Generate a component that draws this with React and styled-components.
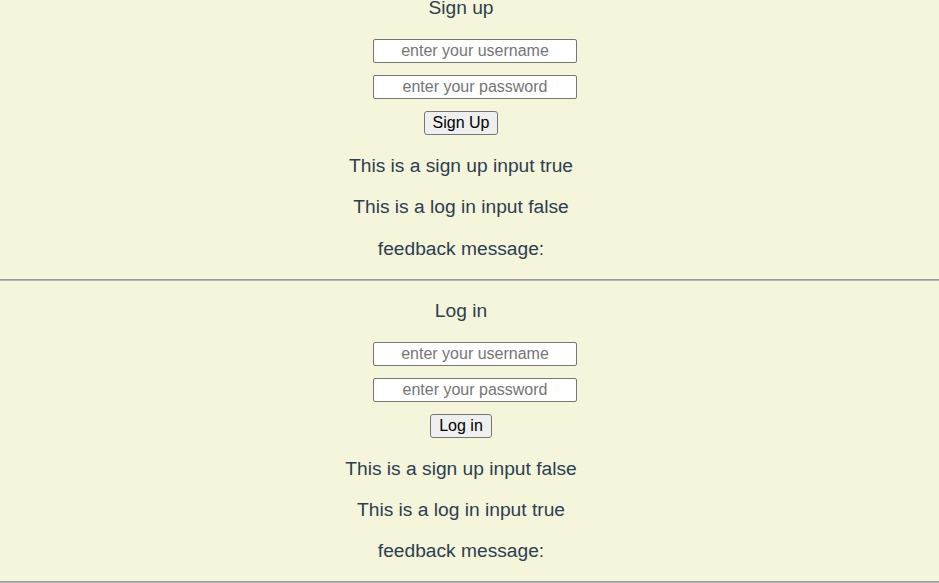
import React from 'react'
import styled, { createGlobalStyle } from 'styled-components'

const GlobalStyle = createGlobalStyle`
  html, body {
    margin: 0;
    padding: 0;
    background: #f5f5dc;
  }
  body {
    font-family: "Liberation Sans", Arial, sans-serif;
    color: #2c3e50;
    overflow: hidden;
  }
`

const Page = styled.div`
  margin-top: -22px;
  text-align: center;
`

const Section = styled.section`
  display: flex;
  flex-direction: column;
  align-items: center;
  padding: 19px 17px 0 0;
`

const Title = styled.div`
  font-size: 19.2px;
  line-height: 22px;
  margin-bottom: 20px;
`

const Field = styled.input`
  box-sizing: border-box;
  width: 204px;
  height: 24px;
  margin: 0 0 12px 28px;
  padding: 1px 2px;
  font-family: "Liberation Sans", Arial, sans-serif;
  font-size: 16px;
  text-align: center;
  background: #fff;
  border: 1px solid #767676;
  border-radius: 2px;
  outline: none;

  &::placeholder {
    color: #757575;
  }
`

const Button = styled.button`
  box-sizing: border-box;
  height: 24px;
  margin-bottom: 1px;
  padding: 1px 8px;
  font-family: "Liberation Sans", Arial, sans-serif;
  font-size: 16px;
  color: #000;
  background: #efefef;
  border: 1px solid #767676;
  border-radius: 3px;
`

const Line = styled.p`
  font-size: 19.2px;
  line-height: 22px;
  margin: 19.2px 0 0;
`

const Divider = styled.hr`
  align-self: stretch;
  margin: 19px -17px 0 0;
  height: 0;
  border: 0;
  border-top: 1px solid #9a9a9a;
  border-bottom: 1px solid #b4b4b4;
`

const AuthForm = ({ title, action, signUp, logIn }) => (
  <Section>
    <Title>{title}</Title>
    <Field placeholder="enter your username" />
    <Field type="password" placeholder="enter your password" />
    <Button>{action}</Button>
    <Line>This is a sign up input {String(signUp)}</Line>
    <Line>This is a log in input {String(logIn)}</Line>
    <Line>feedback message:</Line>
    <Divider />
  </Section>
)

const App = () => (
  <>
    <GlobalStyle />
    <Page>
      <AuthForm title="Sign up" action="Sign Up" signUp={true} logIn={false} />
      <AuthForm title="Log in" action="Log in" signUp={false} logIn={true} />
    </Page>
  </>
)

export default App
